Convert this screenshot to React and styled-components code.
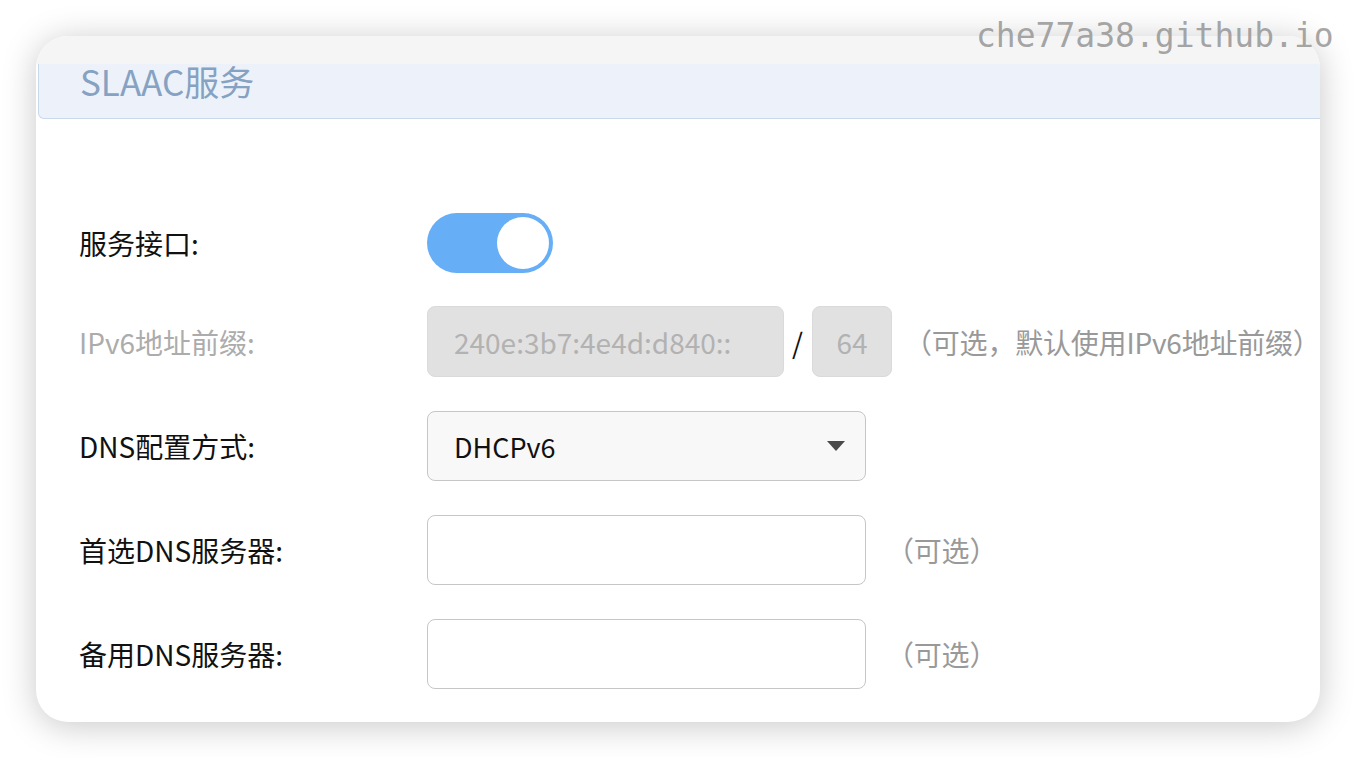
import React from 'react';
import styled, { createGlobalStyle } from 'styled-components';

const GlobalStyle = createGlobalStyle`
    html, body {
        margin: 0;
        padding: 0;
        background: #fff;
    }
    body {
        font-family: "Noto Sans CJK SC", "Noto Sans", sans-serif;
        color: #111;
    }
`;

const Page = styled.div`
    position: relative;
    width: 1356px;
    height: 758px;
    padding: 36px;
    box-sizing: border-box;
`;

const Card = styled.div`
    width: 1284px;
    height: 686px;
    background: #fff;
    border-radius: 32px;
    overflow: hidden;
    box-shadow: 0 4px 34px rgba(0, 0, 0, 0.22);
    display: flex;
    flex-direction: column;
`;

const TopStrip = styled.div`
    height: 28px;
    flex-shrink: 0;
    background: #f5f5f5;
`;

const Header = styled.div`
    height: 54px;
    margin-left: 2px;
    margin-right: -20px;
    flex-shrink: 0;
    background: #edf2fa;
    border: 1px solid #c9d9eb;
    border-top: none;
    border-bottom-left-radius: 6px;
    padding-left: 41px;
`;

const Title = styled.h2`
    margin: 0;
    font-size: 35px;
    font-weight: 400;
    line-height: 34px;
    color: #86a2c2;
`;

const Form = styled.div`
    display: flex;
    flex-direction: column;
    gap: 34px;
    padding: 95px 0 0 43px;
`;

const Row = styled.div`
    display: flex;
    align-items: center;
    height: ${p => p.$h || 70}px;
`;

const Label = styled.div`
    width: 348px;
    flex-shrink: 0;
    font-size: 28px;
    color: ${p => p.$disabled ? '#acacac' : '#111'};
`;

const Switch = styled.div`
    width: 126px;
    height: 60px;
    flex-shrink: 0;
    border-radius: 30px;
    background: #66aef5;
    display: flex;
    align-items: center;
    justify-content: flex-end;
    padding-right: 4px;
    box-sizing: border-box;
`;

const Knob = styled.div`
    width: 52px;
    height: 52px;
    border-radius: 50%;
    background: #fff;
`;

const Field = styled.div`
    width: ${p => p.$w}px;
    height: ${p => p.$disabled ? 71 : 70}px;
    flex-shrink: 0;
    box-sizing: border-box;
    border: 1px solid ${p => p.$disabled ? '#dadada' : '#c6c6c6'};
    border-radius: 8px;
    background: ${p => p.$disabled ? '#e1e1e1' : p.$select ? '#f8f8f8' : '#fff'};
    color: ${p => p.$disabled ? '#b2b2b2' : '#111'};
    font-size: ${p => p.$disabled ? 28 : 27}px;
    display: flex;
    align-items: center;
    justify-content: ${p => p.$center ? 'center' : 'space-between'};
    padding: ${p => p.$center ? '0' : '0 19px 0 26px'};
`;

const Slash = styled.span`
    font-size: 28px;
    color: #111;
    margin: 0 9px 0 8px;
`;

const Hint = styled.span`
    font-size: 28px;
    letter-spacing: -0.2px;
    color: #999;
    margin-left: ${p => p.$gap}px;
    white-space: nowrap;
`;

const Arrow = () => (
    <svg width="20" height="12" viewBox="0 0 20 12">
        <path d="M1 1 L19 1 L10 11 Z" fill="#4a4a4a" />
    </svg>
);

const Watermark = styled.div`
    position: absolute;
    top: 16px;
    left: 976px;
    font-family: "DejaVu Sans Mono", "Liberation Mono", monospace;
    font-size: 33px;
    color: rgba(150, 150, 150, 0.85);
    pointer-events: none;
`;

export default function App() {
    return (
        <Page>
            <GlobalStyle />
            <Card>
                <TopStrip />
                <Header>
                    <Title>SLAAC服务</Title>
                </Header>
                <Form>
                    <Row $h={58}>
                        <Label>服务接口:</Label>
                        <Switch><Knob /></Switch>
                    </Row>
                    <Row $h={71}>
                        <Label $disabled>IPv6地址前缀:</Label>
                        <Field $w={357} $disabled>240e:3b7:4e4d:d840::</Field>
                        <Slash>/</Slash>
                        <Field $w={80} $disabled $center>64</Field>
                        <Hint $gap={12}>（可选，默认使用IPv6地址前缀）</Hint>
                    </Row>
                    <Row>
                        <Label>DNS配置方式:</Label>
                        <Field $w={439} $select>
                            DHCPv6
                            <Arrow />
                        </Field>
                    </Row>
                    <Row>
                        <Label>首选DNS服务器:</Label>
                        <Field $w={439} />
                        <Hint $gap={20}>（可选）</Hint>
                    </Row>
                    <Row>
                        <Label>备用DNS服务器:</Label>
                        <Field $w={439} />
                        <Hint $gap={20}>（可选）</Hint>
                    </Row>
                </Form>
            </Card>
            <Watermark>che77a38.github.io</Watermark>
        </Page>
    );
}
